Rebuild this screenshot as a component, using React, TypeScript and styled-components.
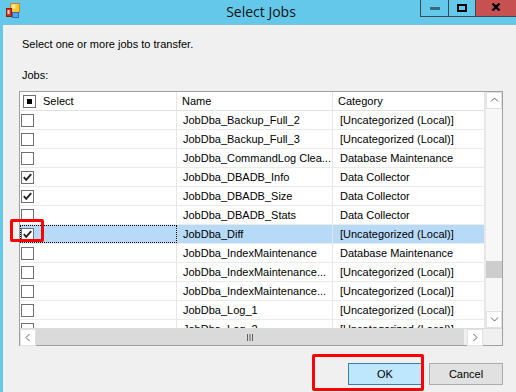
import React from 'react';
import styled, { createGlobalStyle } from 'styled-components';

const GlobalStyle = createGlobalStyle`
  html, body {
    margin: 0;
    padding: 0;
  }

  body {
    font-family: "Liberation Sans", Arial, sans-serif;
    font-size: 11px;
    color: #000;
  }
`;

const WindowStyles = styled.div`
  position: relative;
  width: 516px;
  height: 392px;
  display: flex;
  flex-direction: column;
  background: #f0f0f0;
  overflow: hidden;
`;

const TitleBar = styled.div`
  flex: none;
  height: 24px;
  border-bottom: 1px solid #7ebfd6;
  background: #64c8ea;
  display: grid;
  grid-template-columns: 1fr auto 1fr;
  align-items: start;
`;

const TitleIcon = styled.svg`
  margin: 3px 0 0 5px;
`;

const TitleText = styled.div`
  padding: 2px 0 0 6px;
  font-family: "Open Sans", "Noto Sans", sans-serif;
  font-size: 14px;
  line-height: 20px;
  color: #111;
`;

const WindowControls = styled.div`
  justify-self: end;
  display: flex;
  height: 16px;
  border-left: 1px solid #3c4a50;
  border-bottom: 1px solid #3c4a50;
`;

const ControlButton = styled.div<{ $width: number; $close?: boolean }>`
  width: ${p => p.$width}px;
  display: flex;
  align-items: center;
  justify-content: center;
  background: ${p => (p.$close ? '#c75050' : 'transparent')};
  border-right: ${p => (p.$close ? 'none' : '1px solid #3c4a50')};
`;

const Body = styled.div`
  flex: 1;
  border-left: 3px solid #64c8ea;
  padding: 13px 13px 0 16px;
  display: flex;
  flex-direction: column;
`;

const Label = styled.div<{ $gap: number }>`
  margin: ${p => p.$gap}px 0 0 3px;
  line-height: 13px;
`;

const Grid = styled.div`
  margin-top: 9px;
  width: 484px;
  height: 255px;
  box-sizing: border-box;
  border: 1px solid #a0a0a0;
  background: #fff;
  display: grid;
  grid-template-columns: 465px 17px;
  grid-template-rows: 236px 17px;
`;

const Table = styled.div`
  overflow: hidden;
  display: flex;
  flex-direction: column;
`;

const RowStyles = styled.div<{ $selected?: boolean }>`
  flex: none;
  height: 18px;
  border-bottom: 1px solid #ebebeb;
  display: grid;
  grid-template-columns: 157px 156px 152px;
  background: ${p => (p.$selected ? '#b8daf9' : '#fff')};
`;

const HeaderRow = styled(RowStyles)`
  border-bottom: 1px solid #e3e3e3;
`;

const Cell = styled.div<{ $pad?: number; $focus?: boolean }>`
  position: relative;
  display: flex;
  align-items: center;
  gap: 7px;
  padding-left: ${p => p.$pad ?? 0}px;
  border-right: 1px solid #e6e6e6;
  white-space: nowrap;
  overflow: hidden;
  outline: ${p => (p.$focus ? '1px dotted #000' : 'none')};
  outline-offset: -1px;
`;

const CheckBox = styled.span`
  flex: none;
  width: 13px;
  height: 13px;
  box-sizing: border-box;
  border: 1px solid #707070;
  background: #fff;
  display: flex;
  align-items: center;
  justify-content: center;
`;

const MixedMark = styled.span`
  width: 5px;
  height: 5px;
  background: #000;
`;

const VScroll = styled.div`
  background: #f7f7f7;
  border-left: 1px solid #e8e8e8;
  display: flex;
  flex-direction: column;
`;

const ScrollArrow = styled.div`
  flex: none;
  width: 16px;
  height: 17px;
  box-sizing: border-box;
  border: 1px solid #e2e2e2;
  background: #fff;
  display: flex;
  align-items: center;
  justify-content: center;
`;

const VTrack = styled.div`
  flex: 1;
`;

const VThumb = styled.div<{ $offset: number }>`
  margin-top: ${p => p.$offset}px;
  height: 17px;
  background: #cdcdcd;
`;

const HScroll = styled.div`
  display: flex;
  background: #f0f0f0;
  border-top: 1px solid #dcdcdc;
`;

const HThumb = styled.div`
  width: 428px;
  margin-right: 3px;
  background: #dadada;
  display: flex;
  align-items: center;
  justify-content: center;
`;

const Corner = styled.div`
  background: #f0f0f0;
  border-top: 1px solid #dcdcdc;
`;

const ButtonRow = styled.div`
  margin-top: 17px;
  display: flex;
  justify-content: flex-end;
  gap: 7px;
`;

const DialogButton = styled.button<{ $default?: boolean }>`
  width: 74px;
  height: 22px;
  padding: 0;
  font-family: "Liberation Sans", Arial, sans-serif;
  font-size: 11px;
  color: #000;
  background: ${p => (p.$default ? '#bee6fd' : '#e1e1e1')};
  border: 1px solid ${p => (p.$default ? '#3c7fb1' : '#adadad')};
`;

const RedFrame = styled.div`
  position: absolute;
  box-sizing: border-box;
  border: 3px solid #f00;
  border-radius: 2px;
  pointer-events: none;
`;

interface Job {
  name: string;
  category: string;
  checked?: boolean;
  selected?: boolean;
}

const UNCAT = '[Uncategorized (Local)]';

const jobs: Job[] = [
  { name: 'JobDba_Backup_Full_2', category: UNCAT },
  { name: 'JobDba_Backup_Full_3', category: UNCAT },
  { name: 'JobDba_CommandLog Clea...', category: 'Database Maintenance' },
  { name: 'JobDba_DBADB_Info', category: 'Data Collector', checked: true },
  { name: 'JobDba_DBADB_Size', category: 'Data Collector', checked: true },
  { name: 'JobDba_DBADB_Stats', category: 'Data Collector' },
  { name: 'JobDba_Diff', category: UNCAT, checked: true, selected: true },
  { name: 'JobDba_IndexMaintenance', category: 'Database Maintenance' },
  { name: 'JobDba_IndexMaintenance...', category: UNCAT },
  { name: 'JobDba_IndexMaintenance...', category: UNCAT },
  { name: 'JobDba_Log_1', category: UNCAT },
  { name: 'JobDba_Log_2', category: UNCAT },
];

const Chevron = ({ dir }: { dir: 'up' | 'down' | 'left' | 'right' }) => {
  const d = {
    up: 'M1 5.5 L4.5 2 L8 5.5',
    down: 'M1 2.5 L4.5 6 L8 2.5',
    left: 'M5.5 1 L2 4.5 L5.5 8',
    right: 'M2.5 1 L6 4.5 L2.5 8',
  }[dir];
  return (
    <svg width="9" height="9" viewBox="0 0 9 9">
      <path d={d} fill="none" stroke="#606060" strokeWidth="1" />
    </svg>
  );
};

const Check = () => (
  <svg width="11" height="11" viewBox="0 0 11 11">
    <path d="M1.8 5.2 L4.2 7.8 L9.2 2.2" fill="none" stroke="#222" strokeWidth="1.9" />
  </svg>
);

export default function App(): JSX.Element {
  return (
    <>
      <GlobalStyle />
      <WindowStyles>
        <TitleBar>
          <TitleIcon width="16" height="16" viewBox="0 0 16 16">
            <rect x="5.5" y="0.5" width="9" height="9" fill="#f7c631" stroke="#c9862a" />
            <rect x="6.5" y="1.5" width="4" height="4" fill="#fde58a" />
            <rect x="7.5" y="9.5" width="6" height="5" fill="#5d9fe0" stroke="#2c6db5" />
            <rect x="1.5" y="5.5" width="5" height="8" fill="#d5301c" stroke="#8e1d10" />
            <rect x="2.5" y="7" width="2" height="4" fill="#f7d3cc" />
          </TitleIcon>
          <TitleText>Select Jobs</TitleText>
          <WindowControls>
            <ControlButton $width={27}>
              <svg width="10" height="3" viewBox="0 0 10 3">
                <rect width="10" height="3" fill="#3a6a80" />
              </svg>
            </ControlButton>
            <ControlButton $width={26}>
              <svg width="10" height="8" viewBox="0 0 10 8">
                <rect x="1" y="1" width="8" height="6" fill="none" stroke="#000" strokeWidth="2" />
              </svg>
            </ControlButton>
            <ControlButton $width={40} $close>
              <svg width="10" height="8" viewBox="0 0 10 8" style={{ marginTop: -2 }}>
                <path d="M1.5 0.5 L8.5 7.5 M8.5 0.5 L1.5 7.5" stroke="#000" strokeWidth="2.4" />
              </svg>
            </ControlButton>
          </WindowControls>
        </TitleBar>

        <Body>
          <Label $gap={0}>Select one or more jobs to transfer.</Label>
          <Label $gap={18}>Jobs:</Label>

          <Grid>
            <Table>
              <HeaderRow>
                <Cell $pad={3}>
                  <CheckBox>
                    <MixedMark />
                  </CheckBox>
                  Select
                </Cell>
                <Cell $pad={5}>Name</Cell>
                <Cell $pad={5}>Category</Cell>
              </HeaderRow>
              {jobs.map((job, i) => (
                <RowStyles key={i} $selected={job.selected}>
                  <Cell $pad={1} $focus={job.selected}>
                    <CheckBox>{job.checked && <Check />}</CheckBox>
                  </Cell>
                  <Cell $pad={6}>{job.name}</Cell>
                  <Cell $pad={7}>{job.category}</Cell>
                </RowStyles>
              ))}
            </Table>

            <VScroll>
              <ScrollArrow>
                <Chevron dir="up" />
              </ScrollArrow>
              <VTrack>
                <VThumb $offset={152} />
              </VTrack>
              <ScrollArrow>
                <Chevron dir="down" />
              </ScrollArrow>
            </VScroll>

            <HScroll>
              <ScrollArrow>
                <Chevron dir="left" />
              </ScrollArrow>
              <HThumb>
                <svg width="8" height="7" viewBox="0 0 8 7">
                  <path d="M1.5 0 V7 M4 0 V7 M6.5 0 V7" stroke="#606060" strokeWidth="1" />
                </svg>
              </HThumb>
              <ScrollArrow>
                <Chevron dir="right" />
              </ScrollArrow>
            </HScroll>
            <Corner />
          </Grid>

          <ButtonRow>
            <DialogButton type="button" $default>
              OK
            </DialogButton>
            <DialogButton type="button">Cancel</DialogButton>
          </ButtonRow>
        </Body>

        <RedFrame style={{ left: 10, top: 219, width: 34, height: 23 }} />
        <RedFrame style={{ left: 312, top: 354, width: 112, height: 37 }} />
      </WindowStyles>
    </>
  );
}
